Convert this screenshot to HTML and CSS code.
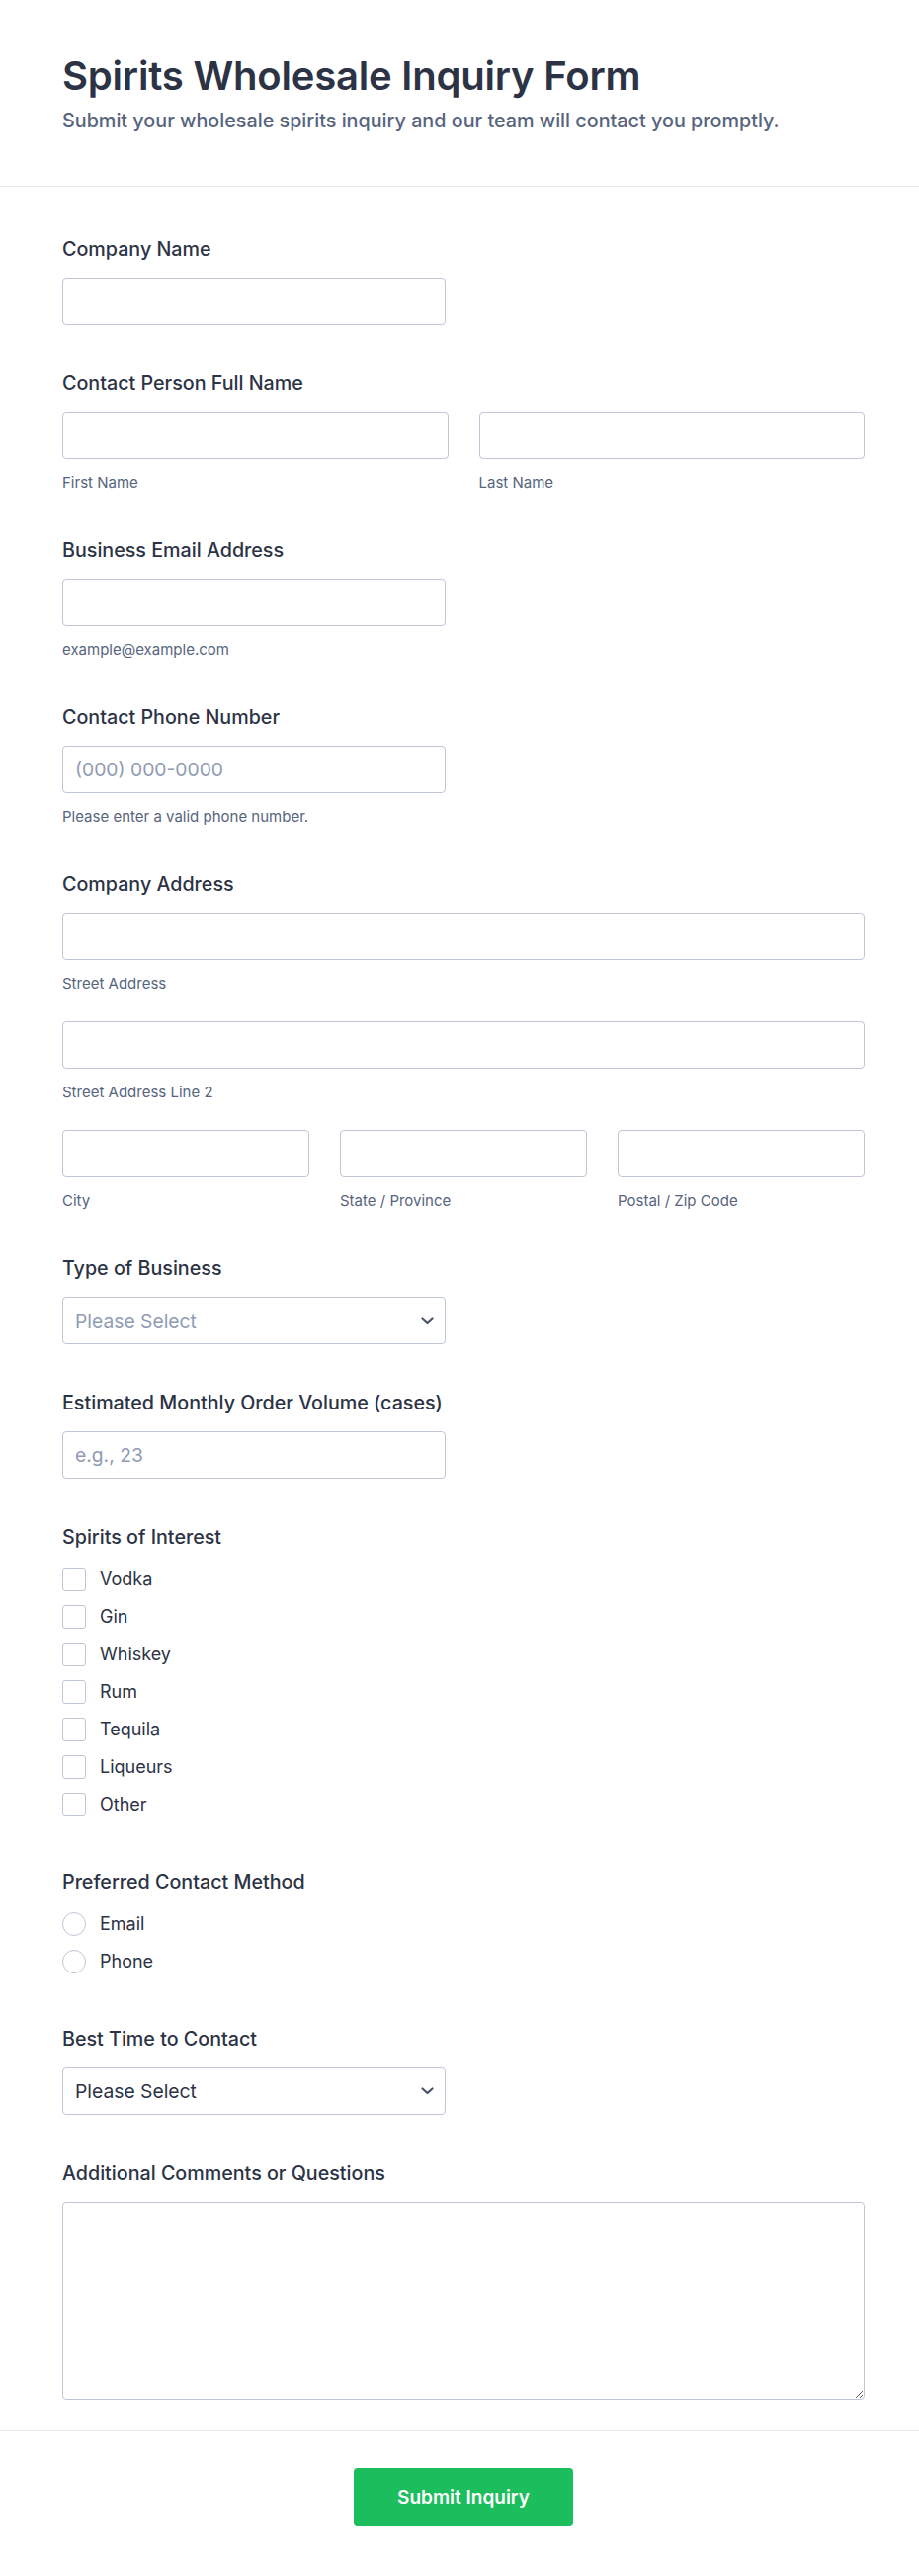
FILE: index.html
```html
<!DOCTYPE html>
<html lang="en">
<head>
  <meta charset="UTF-8" />
  <meta name="viewport" content="width=device-width, initial-scale=1.0"/>
  <title>Spirits Wholesale Inquiry Form</title>
  <link rel="stylesheet" href="styles.css">
</head>
<body>
  <form class="form">
    <div class="form-header">
      <h1>Spirits Wholesale Inquiry Form</h1>
      <p>Submit your wholesale spirits inquiry and our team will contact you promptly.</p>
    </div>

    <div class="form-body">
      <div class="field">
        <label class="label">Company Name</label>
        <input class="input half" type="text">
      </div>

      <div class="field">
        <label class="label">Contact Person Full Name</label>
        <div class="row two">
          <div>
            <input class="input" type="text">
            <span class="sublabel">First Name</span>
          </div>
          <div>
            <input class="input" type="text">
            <span class="sublabel">Last Name</span>
          </div>
        </div>
      </div>

      <div class="field">
        <label class="label">Business Email Address</label>
        <input class="input half" type="email">
        <span class="sublabel">example@example.com</span>
      </div>

      <div class="field">
        <label class="label">Contact Phone Number</label>
        <input class="input half" type="tel" placeholder="(000) 000-0000">
        <span class="sublabel">Please enter a valid phone number.</span>
      </div>

      <div class="field">
        <label class="label">Company Address</label>
        <input class="input" type="text">
        <span class="sublabel">Street Address</span>
        <input class="input gap-top" type="text">
        <span class="sublabel">Street Address Line 2</span>
        <div class="row three gap-top">
          <div>
            <input class="input" type="text">
            <span class="sublabel">City</span>
          </div>
          <div>
            <input class="input" type="text">
            <span class="sublabel">State / Province</span>
          </div>
          <div>
            <input class="input" type="text">
            <span class="sublabel">Postal / Zip Code</span>
          </div>
        </div>
      </div>

      <div class="field">
        <label class="label">Type of Business</label>
        <div class="select-wrap half">
          <select class="input select empty">
            <option>Please Select</option>
            <option>Retailer</option>
            <option>Bar / Restaurant</option>
            <option>Distributor</option>
            <option>Hotel</option>
          </select>
          <svg class="chevron" width="13" height="8" viewBox="0 0 13 8"><path d="M1.5 1.5l5 4.5 5-4.5" fill="none" stroke="#4a5369" stroke-width="2.2" stroke-linecap="round" stroke-linejoin="round"/></svg>
        </div>
      </div>

      <div class="field">
        <label class="label">Estimated Monthly Order Volume (cases)</label>
        <input class="input half" type="number" placeholder="e.g., 23">
      </div>

      <div class="field">
        <label class="label">Spirits of Interest</label>
        <div class="options">
          <label class="option"><input type="checkbox" class="check">Vodka</label>
          <label class="option"><input type="checkbox" class="check">Gin</label>
          <label class="option"><input type="checkbox" class="check">Whiskey</label>
          <label class="option"><input type="checkbox" class="check">Rum</label>
          <label class="option"><input type="checkbox" class="check">Tequila</label>
          <label class="option"><input type="checkbox" class="check">Liqueurs</label>
          <label class="option"><input type="checkbox" class="check">Other</label>
        </div>
      </div>

      <div class="field">
        <label class="label">Preferred Contact Method</label>
        <div class="options">
          <label class="option"><input type="radio" name="method" class="check radio">Email</label>
          <label class="option"><input type="radio" name="method" class="check radio">Phone</label>
        </div>
      </div>

      <div class="field">
        <label class="label">Best Time to Contact</label>
        <div class="select-wrap half">
          <select class="input select">
            <option>Please Select</option>
            <option>Morning</option>
            <option>Afternoon</option>
            <option>Evening</option>
          </select>
          <svg class="chevron" width="13" height="8" viewBox="0 0 13 8"><path d="M1.5 1.5l5 4.5 5-4.5" fill="none" stroke="#4a5369" stroke-width="2.2" stroke-linecap="round" stroke-linejoin="round"/></svg>
        </div>
      </div>

      <div class="field">
        <label class="label">Additional Comments or Questions</label>
        <textarea class="input textarea"></textarea>
      </div>
    </div>

    <div class="form-footer">
      <button type="submit" class="submit">Submit Inquiry</button>
    </div>
  </form>
</body>
</html>
```

FILE: styles.css
```css
* {
  box-sizing: border-box;
}
body {
  margin: 0;
  font-family: Inter, "Noto Sans", sans-serif;
  color: #2c3345;
  background: #fff;
}
.form-header {
  padding: 55px 55px 53px 63px;
  border-bottom: 1px solid #e3e6ec;
}
.form-header h1 {
  margin: 0;
  font-size: 40px;
  line-height: 44px;
  font-weight: 600;
  letter-spacing: -0.2px;
  color: #2c3345;
}
.form-header p {
  margin: 10px 0 0;
  font-size: 19.75px;
  line-height: 26px;
  font-weight: 500;
  color: #57647e;
}
.form-body {
  padding: 52px 55px 30px 63px;
}
.field {
  margin-bottom: 48px;
}
.field:last-child {
  margin-bottom: 0;
}
.label {
  display: block;
  font-size: 19.7px;
  line-height: 22px;
  font-weight: 500;
  margin-bottom: 18px;
}
.input {
  display: block;
  width: 100%;
  height: 48px;
  padding: 0 12px;
  border: 1px solid #bfc6d5;
  border-radius: 4px;
  font-family: inherit;
  font-size: 19.3px;
  color: #2c3345;
  background: #fff;
}
.input::placeholder {
  color: #8f9bb3;
}
.half {
  width: 388px;
}
.sublabel {
  display: block;
  margin-top: 15px;
  font-size: 15px;
  line-height: 18px;
  color: #57647e;
}
.gap-top {
  margin-top: 29px;
}
.row {
  display: grid;
  gap: 31px;
}
.row.two { grid-template-columns: 1fr 1fr; }
.row.three { grid-template-columns: 1fr 1fr 1fr; }

.select-wrap {
  position: relative;
}
.select {
  appearance: none;
  -webkit-appearance: none;
  padding-right: 36px;
}
.select.empty {
  color: #8f9bb3;
}
.chevron {
  position: absolute;
  right: 12px;
  top: 20px;
  pointer-events: none;
}

.options {
  display: flex;
  flex-direction: column;
  gap: 14px;
  padding-top: 2px;
  padding-bottom: 7px;
}
.option {
  display: flex;
  align-items: center;
  gap: 14px;
  font-size: 18px;
  line-height: 24px;
  color: #2c3345;
}
.check {
  appearance: none;
  -webkit-appearance: none;
  margin: 0;
  width: 24px;
  height: 24px;
  border: 1px solid #bfc6d5;
  border-radius: 3px;
  background: #fff;
  flex-shrink: 0;
}
.check.radio {
  border-radius: 50%;
}

.textarea {
  height: 201px;
  padding: 12px;
  resize: vertical;
}

.form-footer {
  border-top: 1px solid #e8eaef;
  padding: 38px 55px 51px 63px;
  display: flex;
  justify-content: center;
}
.submit {
  width: 222px;
  height: 58px;
  border: none;
  border-radius: 4px;
  background: #1bbd5d;
  color: #fff;
  font-family: inherit;
  font-size: 19px;
  font-weight: 600;
  cursor: pointer;
}
```
